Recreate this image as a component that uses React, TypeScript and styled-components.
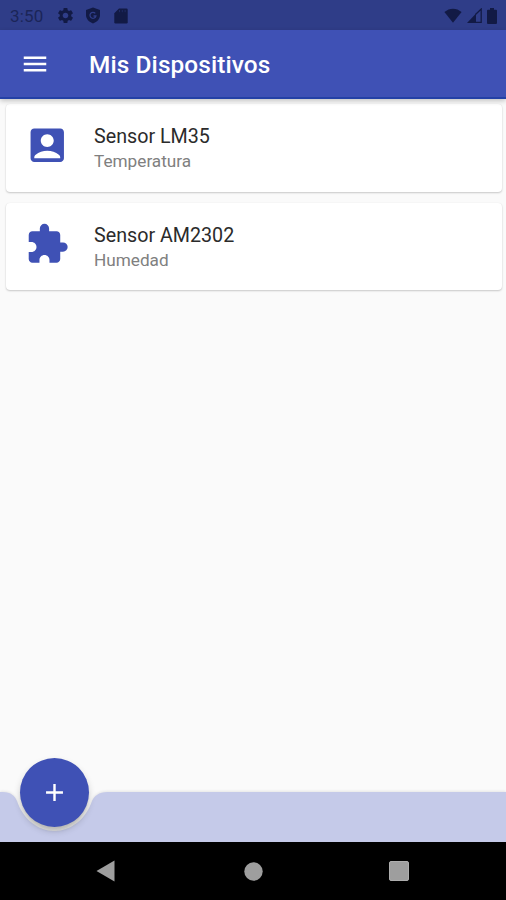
import React from "react";
import styled, { createGlobalStyle } from "styled-components";
import { MdAccountBox, MdAdd, MdExtension, MdMenu, MdSettings } from "react-icons/md";

const GlobalStyle = createGlobalStyle`
  * { box-sizing: border-box; }
  body { margin: 0; font-family: Roboto, sans-serif; background: #fafafa; }
`;

const Screen = styled.div`
  width: 506px;
  height: 900px;
  display: flex;
  flex-direction: column;
  overflow: hidden;
  background: #fafafa;
`;

const StatusBar = styled.div`
  height: 30px;
  flex: none;
  display: flex;
  align-items: center;
  justify-content: space-between;
  padding: 1px 9px 0 10px;
  background: #2f3d88;
  color: #121a45;
`;

const StatusGroup = styled.div<{ $gap: number }>`
  display: flex;
  align-items: center;
  gap: ${(p) => p.$gap}px;

  svg { display: block; }
`;

const Clock = styled.span`
  width: 36px;
  font-size: 17px;
  line-height: 28px;
  letter-spacing: 0.2px;
  color: #1b2558;
`;

const AppBar = styled.header`
  height: 69px;
  flex: none;
  display: flex;
  align-items: center;
  padding: 1px 20px 0;
  gap: 39px;
  background: #3f51b5;
  color: #fff;
  border-bottom: 2px solid #2441a6;
  box-shadow: 0 2px 5px rgba(0, 0, 0, 0.22);
  z-index: 1;
`;

const MenuButton = styled.button`
  display: flex;
  padding: 0;
  border: 0;
  background: none;
  color: inherit;
`;

const Title = styled.h1`
  margin: 0;
  padding-top: 2px;
  font-size: 24.4px;
  font-weight: 500;
  line-height: 30px;
  letter-spacing: 0.1px;
`;

const DeviceList = styled.main`
  flex: 1;
  display: flex;
  flex-direction: column;
  gap: 11px;
  padding: 5px 4px 0 6px;
`;

const Card = styled.article`
  height: 87.5px;
  display: flex;
  align-items: flex-start;
  gap: 24.5px;
  padding: 19px 19px 0;
  border-radius: 4px;
  background: #fff;
  box-shadow: 0 1px 2px rgba(0, 0, 0, 0.2), 0 0 1px rgba(0, 0, 0, 0.08);
`;

const CardIcon = styled.div`
  display: flex;
  color: #3f51b5;
`;

const CardText = styled.div`
  display: flex;
  flex-direction: column;
  padding-top: 1px;
`;

const DeviceName = styled.span`
  font-size: 19.7px;
  line-height: 26px;
  color: #2b2b2b;
`;

const DeviceKind = styled.span`
  font-size: 17.2px;
  line-height: 23px;
  color: #808080;
`;

const BottomBar = styled.footer`
  position: relative;
  height: 50px;
  flex: none;
`;

const BarShape = styled.svg`
  display: block;
  overflow: visible;
  filter: drop-shadow(0 -1px 1px rgba(0, 0, 0, 0.08));
`;

const AddButton = styled.button`
  position: absolute;
  left: 20px;
  top: -34px;
  width: 69px;
  height: 69px;
  display: flex;
  align-items: center;
  justify-content: center;
  padding: 0;
  border: 0;
  border-radius: 50%;
  background: #3f51b5;
  color: #fff;
  box-shadow: 0 4px 3px -1px rgba(80, 80, 70, 0.2), 0 4px 7px rgba(0, 0, 0, 0.18);
`;

const NavBar = styled.nav`
  height: 58px;
  flex: none;
  display: flex;
  align-items: center;
  justify-content: space-between;
  padding: 0 97px 0 96px;
  background: #000;
  color: #9e9e9e;
  z-index: 1;

  svg { display: block; }
`;

const devices = [
  { name: "Sensor LM35", kind: "Temperatura", Icon: MdAccountBox },
  { name: "Sensor AM2302", kind: "Humedad", Icon: MdExtension },
];

const ShieldIcon = () => (
  <svg width="16" height="17" viewBox="0 0 16 17">
    <path d="M8 .5 15 3v5c0 4-3 7-7 8.5C4 15 1 12 1 8V3z" fill="currentColor" />
    <path d="M10.300 6.400A3 3 0 1 0 10.900 9H8.500" fill="none" stroke="#2f3d88" strokeWidth="1.300" />
  </svg>
);

const SdCardIcon = () => (
  <svg width="17" height="16" viewBox="-3 0 17 16">
    <path d="M5 .5h7.500q1.200 0 1.200 1.200v12.600q0 1.200-1.200 1.200h-11Q.3 15.500.3 14.300V5.200z" fill="currentColor" />
    <path d="M5.500 2v2.200M8.300 2v2.200M11.100 2v2.200" stroke="#2f3d88" strokeOpacity=".45" />
  </svg>
);

const WifiIcon = () => (
  <svg width="18" height="15" viewBox="0 0 18 15">
    <path d="M9 14.7.4 4C5.5-.5 12.5-.5 17.6 4z" fill="currentColor" />
  </svg>
);

const SignalIcon = () => (
  <svg width="15" height="15" viewBox="0 0 15 15">
    <path d="M0 15 9 5.500V15z" fill="currentColor" />
    <path d="M8.500 14.300h5.700V1L8.500 6.500" fill="none" stroke="currentColor" strokeWidth="1.300" />
  </svg>
);

const BatteryIcon = () => (
  <svg width="10" height="16" viewBox="0 0 10 16">
    <path d="M3 0h4v1.700h2q1 0 1 1V15q0 1-1 1H1q-1 0-1-1V2.700q0-1 1-1h2z" fill="currentColor" />
  </svg>
);

export default function App() {
  return (
    <Screen>
      <GlobalStyle />
      <StatusBar>
        <StatusGroup $gap={10}>
          <Clock>3:50</Clock>
          <MdSettings size={19} />
          <ShieldIcon />
          <SdCardIcon />
        </StatusGroup>
        <StatusGroup $gap={5}>
          <WifiIcon />
          <SignalIcon />
          <BatteryIcon />
        </StatusGroup>
      </StatusBar>
      <AppBar>
        <MenuButton aria-label="Menú">
          <MdMenu size={30} />
        </MenuButton>
        <Title>Mis Dispositivos</Title>
      </AppBar>
      <DeviceList>
        {devices.map(({ name, kind, Icon }) => (
          <Card key={name}>
            <CardIcon>
              <Icon size={44.5} />
            </CardIcon>
            <CardText>
              <DeviceName>{name}</DeviceName>
              <DeviceKind>{kind}</DeviceKind>
            </CardText>
          </Card>
        ))}
      </DeviceList>
      <BottomBar>
        <BarShape width="506" height="50" viewBox="0 0 506 50">
          <path
            d="M0 0H3C11 0 15 4 17 9C23 27 38 39 54.500 39S86 27 92 9C94 4 99 0 107 0H506V50H0Z"
            fill="#c5cae9"
          />
        </BarShape>
        <AddButton aria-label="Añadir">
          <MdAdd size={29} />
        </AddButton>
      </BottomBar>
      <NavBar>
        <svg width="19" height="22" viewBox="0 0 19 22">
          <path d="M.5 11 18.500.5v21z" fill="currentColor" />
        </svg>
        <svg width="21" height="19" viewBox="0 0 21 19">
          <circle cx="11.500" cy="9.500" r="9.200" fill="currentColor" />
        </svg>
        <svg width="20" height="20" viewBox="0 0 20 20">
          <rect x=".5" y=".5" width="19" height="19" rx="1.500" fill="currentColor" stroke="#aeaeae" />
        </svg>
      </NavBar>
    </Screen>
  );
}
